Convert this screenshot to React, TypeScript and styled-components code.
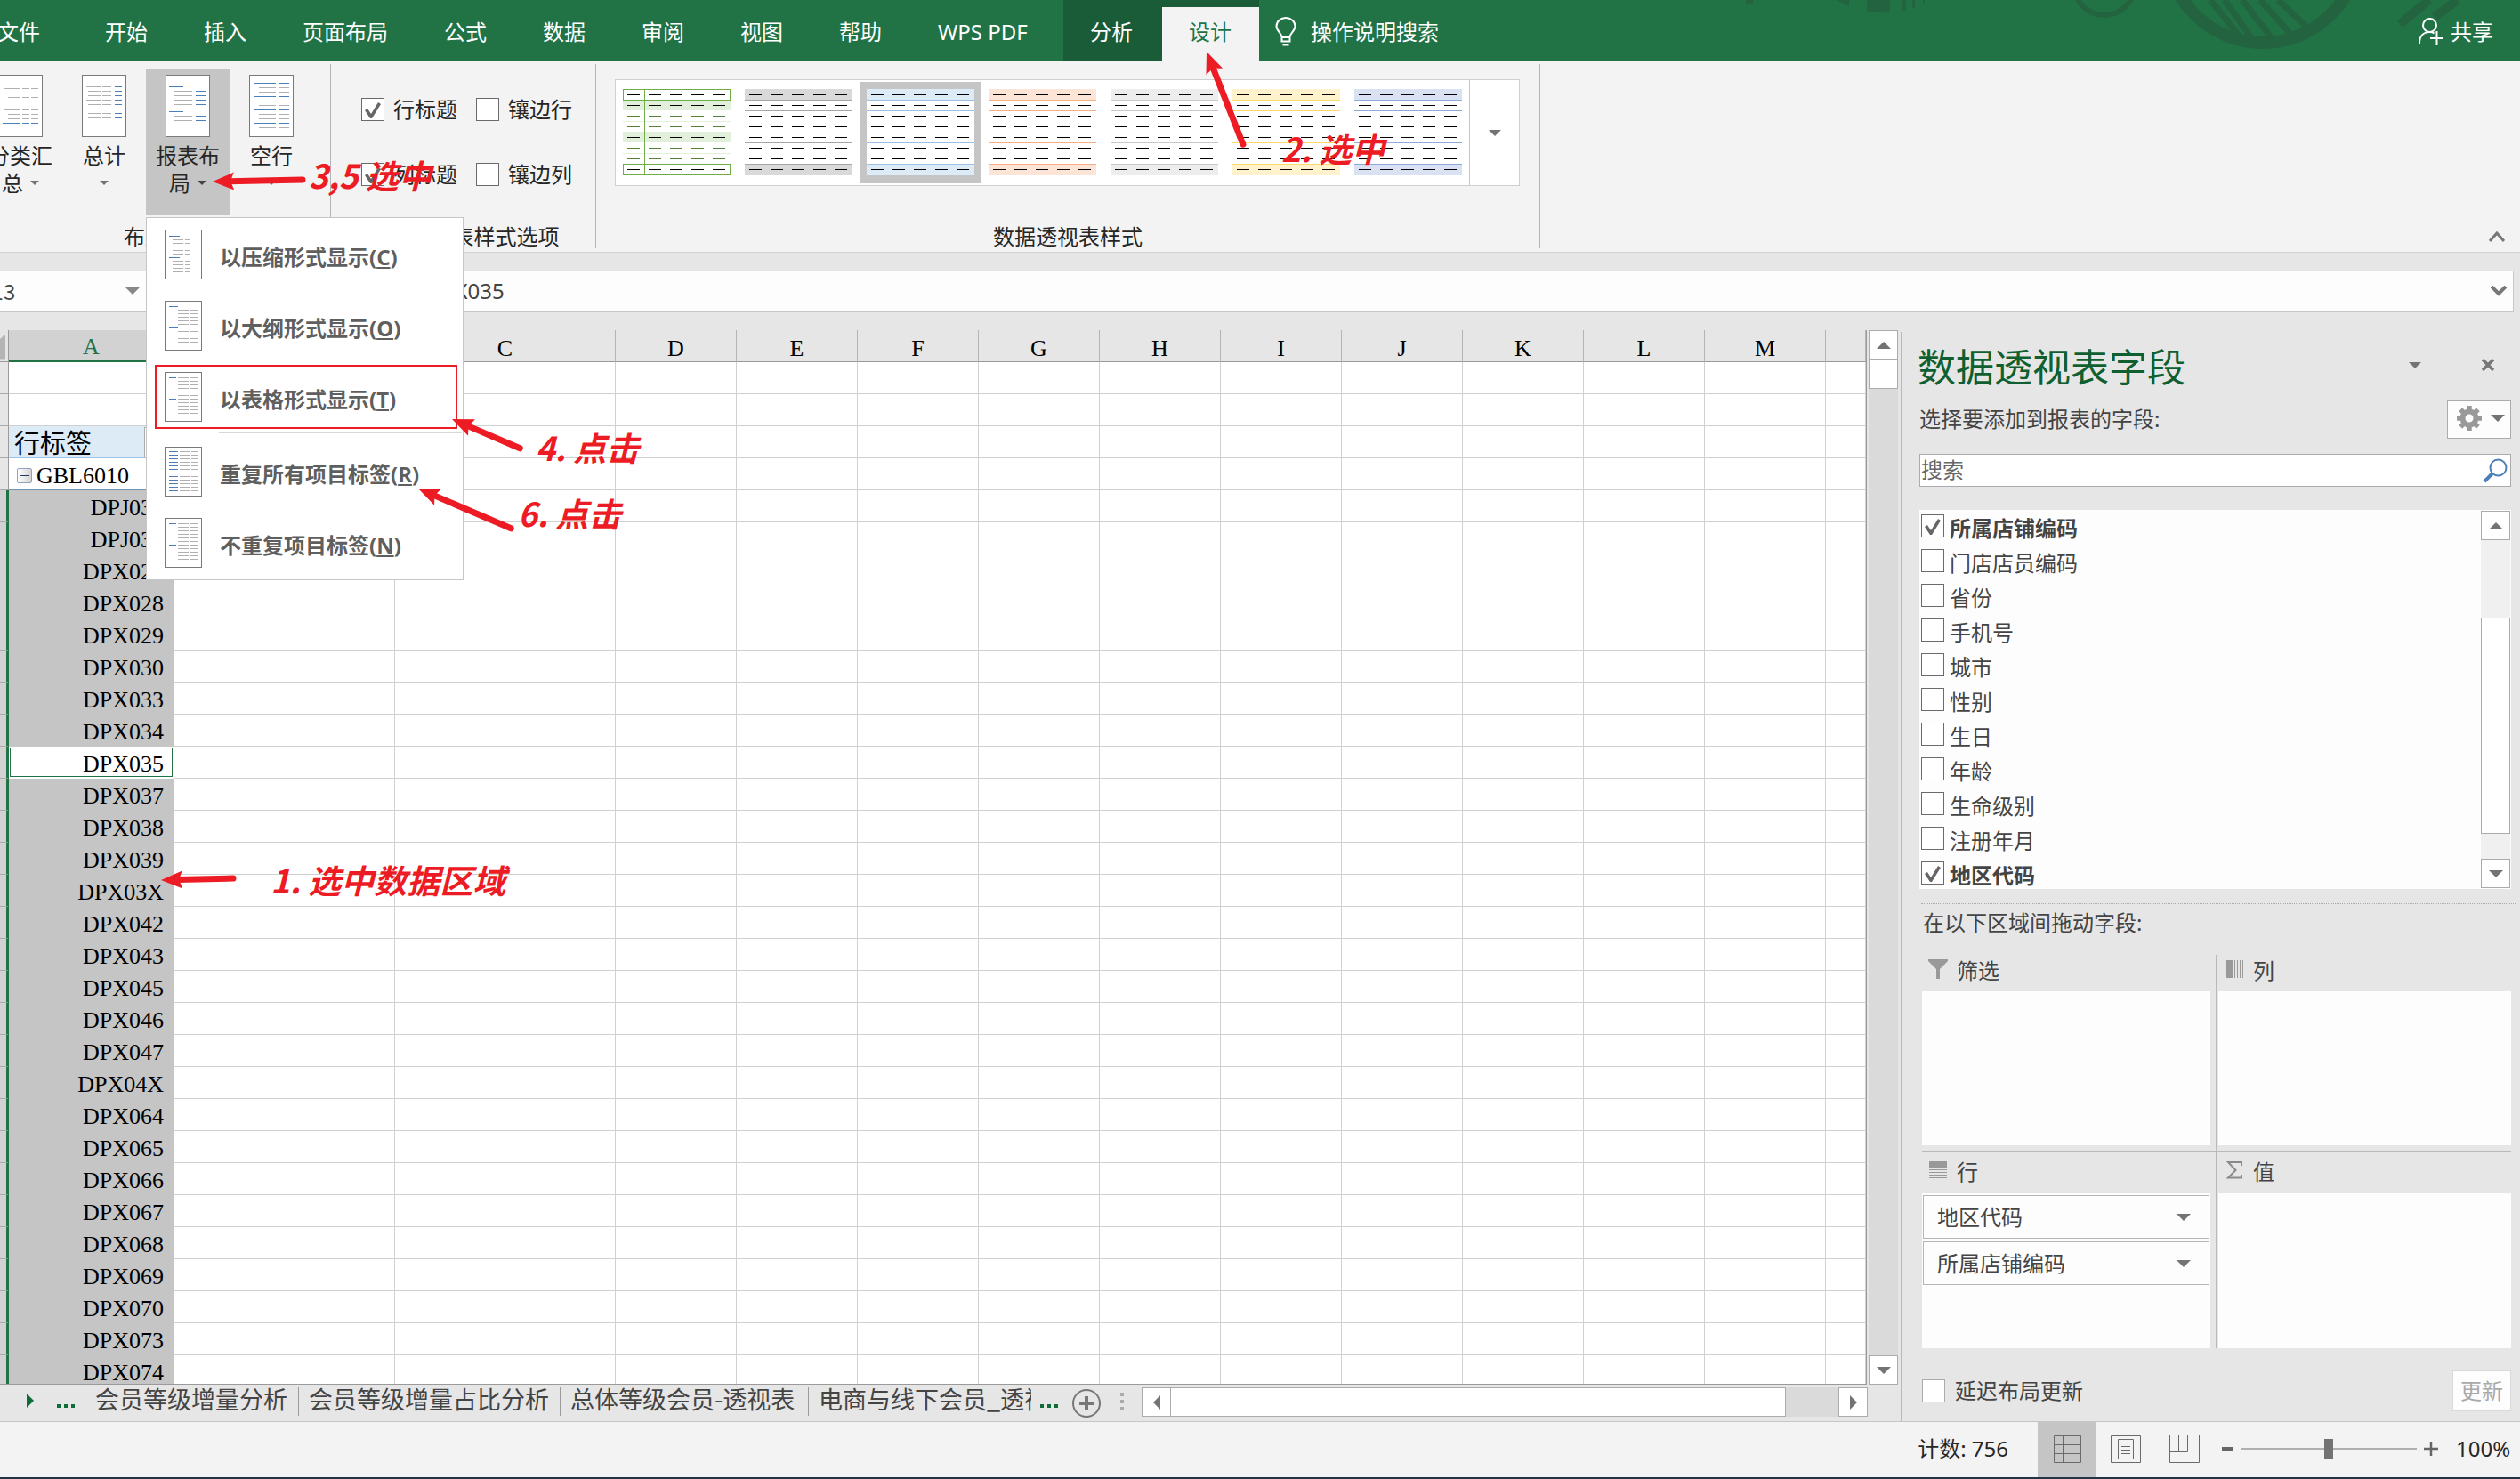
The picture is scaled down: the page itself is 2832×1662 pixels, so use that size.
import React from "react";
import styled, { createGlobalStyle, css } from "styled-components";

const ui = `"Noto Sans", "Noto Sans CJK SC", sans-serif`;
const cjk = `"Noto Sans CJK SC", sans-serif`;
const cellFont = `"Liberation Serif", "Noto Sans CJK SC", serif`;

const color = {
  green: "#217346",
  greenDark: "#1b5c38",
  ribbon: "#f3f3f3",
  chrome: "#e6e6e6",
  line: "#c6c6c6",
  gridLine: "#d0d0d0",
  pressed: "#c5c5c5",
  text: "#262626",
  soft: "#444444",
  mark: "#ed1c24",
  blue: "#4a7fb8",
  grey: "#b0b0b0",
};

const GlobalStyle = createGlobalStyle`
  *, *::before, *::after { box-sizing: border-box; }
  body { margin: 0; overflow: hidden; background: ${color.chrome}; }
  button, input { font: inherit; color: inherit; margin: 0; border-radius: 0; }
  button { padding: 0; border: 0; background: none; }
`;

const Page = styled.div`
  position: relative;
  display: flex;
  flex-direction: column;
  height: 100vh;
  overflow: hidden;
  font: 24px/32px ${ui};
  color: ${color.text};
`;

/* ---------- shared parts ---------- */

const Caret = styled.span<{ $up?: boolean; $size?: number; $tone?: string }>`
  flex: none;
  width: 0;
  height: 0;
  border: ${(p) => p.$size ?? 7}px solid transparent;
  border-bottom-width: 0;
  border-top-color: ${(p) => p.$tone ?? "#737373"};
  ${(p) => p.$up && css`transform: rotate(180deg);`}
`;

const SideCaret = styled.span<{ $left?: boolean; $tone?: string }>`
  width: 0;
  height: 0;
  border: 8px solid transparent;
  border-right-width: 0;
  border-left-color: ${(p) => p.$tone ?? "#737373"};
  ${(p) => p.$left && css`transform: rotate(180deg);`}
`;

const CheckBox = styled.input.attrs({ type: "checkbox" })<{ $light?: boolean }>`
  appearance: none;
  flex: none;
  width: 26px;
  height: 26px;
  border: 1px solid ${(p) => (p.$light ? "#ababab" : "#6a6a6a")};
  background: #fff;
  &:checked::before {
    content: "";
    display: block;
    width: 24px;
    height: 24px;
    background: #666;
    clip-path: polygon(3px 13px, 6px 11px, 10px 17px, 18px 4px, 21px 6px, 11px 22px, 9px 22px);
  }
`;

/* ---------- title bar ---------- */

const TabBar = styled.header`
  position: relative;
  display: flex;
  flex: none;
  height: 68px;
  background: ${color.green};
  color: #fff;
`;

const TabNav = styled.nav`
  display: flex;
  margin-left: -3px;
`;

const Tab = styled.button<{ $first?: boolean; $active?: boolean; $min?: number }>`
  height: 60px;
  min-width: ${(p) => p.$min ?? 0}px;
  margin-top: 8px;
  padding: ${(p) => (p.$first ? "0 43px 4px 0" : p.$active ? "0 31px 4px 30px" : "0 33px 4px 30px")};
  text-align: left;
  white-space: nowrap;
  ${(p) => p.$active && css`
    background: ${color.ribbon};
    color: ${color.green};
  `}
`;

const ContextTabs = styled.div`
  display: flex;
  background: ${color.greenDark};
`;

const TellMe = styled.button`
  display: flex;
  align-items: center;
  gap: 16px;
  height: 60px;
  margin-top: 8px;
  padding: 0 0 4px 18px;
`;

const Share = styled.button`
  position: relative;
  display: flex;
  align-items: center;
  gap: 8px;
  height: 60px;
  margin: 8px 30px 0 auto;
  padding-bottom: 4px;
`;

const Pattern = styled.svg`
  position: absolute;
  top: 0;
  right: 0;
`;

const Decoration = () => (
  <Pattern width="880" height="68" viewBox="1952 0 880 68" fill="none" stroke="#23633f">
    <circle cx="2543" cy="-60" r="108" strokeWidth="14" />
    <circle cx="2365" cy="-17" r="34" strokeWidth="6" />
    <path d="M2484 0 2518 42M2500 0 2532 45M2520 0 2554 44M2540 0 2574 38M2560 0 2592 30" strokeWidth="7" />
    <path d="M2730 0 2697 27M2762 0 2736 19" strokeWidth="10" />
    <path d="M2098 0h26v14q-14 1-26-1zM2138 0h4v12h-4zM2149 0h3v9h-3zM2161 0h2v5h-2zM1962 0h8v4h-8zM2064 0h14v7z" fill="#23633f" stroke="none" />
  </Pattern>
);

const Bulb = () => (
  <svg width="24" height="34" viewBox="0 0 24 34" fill="none" stroke="#fff" strokeWidth="2">
    <path d="M7.500 23c0-5-6-7-6-12.500a10.500 9.500 0 0 1 21 0C22.500 16 16.500 18 16.500 23zM7.500 23v4.500h9V23M8.500 31.500h7" />
  </svg>
);

const Person = () => (
  <svg width="28" height="32" viewBox="0 0 28 32" fill="none" stroke="#fff" strokeWidth="2">
    <circle cx="12.500" cy="8.500" r="7.500" />
    <path d="M1 29c0-8 4-13 11.500-13 2 0 4 .5 5 1.500M13 23h15M20.500 15v16" />
  </svg>
);

/* ---------- ribbon ---------- */

const Ribbon = styled.section`
  position: relative;
  z-index: 2;
  display: flex;
  flex: none;
  height: 216px;
  padding: 4px 0;
  background: ${color.ribbon};
  border-bottom: 1px solid #d0d0d0;
`;

const Group = styled.div<{ $width: number; $lead?: boolean }>`
  display: flex;
  flex-direction: column;
  flex: none;
  width: ${(p) => p.$width}px;
  ${(p) => p.$lead && css`margin-left: -45px;`}
  border-right: 1px solid #b5b5b5;
`;

const GroupName = styled.div`
  margin-top: auto;
  padding-bottom: 1px;
  line-height: 24px;
  text-align: center;
`;

const LayoutButtons = styled.div`
  display: flex;
  padding: 6px 0 0 21px;
`;

const MenuAnchor = styled.div`
  position: relative;
`;

const LayoutButton = styled.button<{ $pressed?: boolean }>`
  display: flex;
  flex-direction: column;
  align-items: center;
  width: 94px;
  height: 164px;
  padding-top: 6px;
  background: ${(p) => (p.$pressed ? color.pressed : "transparent")};
`;

const ButtonLine = styled.span<{ $after?: boolean }>`
  display: flex;
  align-items: center;
  justify-content: center;
  gap: 8px;
  height: 31px;
  white-space: nowrap;
  ${(p) => p.$after && css`margin-top: 5px;`}
`;

type Seg = [number[], [number, number][], boolean];

const Sheet = ({ w, h, segs }: { w: number; h: number; segs: Seg[] }) => (
  <svg width={w} height={h} viewBox={`0 0 ${w} ${h}`} shapeRendering="crispEdges">
    <rect x="0.5" y="0.5" width={w - 1} height={h - 1} fill="#fff" stroke="#7a7a7a" />
    {segs.map(([ys, xs, blue], i) => (
      <path
        key={i}
        d={ys.map((y) => xs.map(([a, b]) => `M${a} ${y + 0.5}H${b}`).join("")).join("")}
        stroke={blue ? color.blue : color.grey}
      />
    ))}
  </svg>
);

const subtotalSegs: Seg[] = [
  [[15, 39], [[7, 25], [27, 35], [37, 45]], false],
  [[20, 25, 44, 49], [[11, 25], [27, 35], [37, 45]], false],
  [[29, 54], [[5, 25], [27, 35], [37, 45]], true],
];
const totalSegs: Seg[] = [
  [[13, 28], [[5, 21], [23, 33]], false],
  [[18, 23, 33, 38, 43, 48], [[7, 21], [23, 33]], false],
  [[13, 18, 23, 28, 33, 38, 43, 48], [[37, 45]], true],
  [[56], [[5, 21], [23, 33], [37, 45]], true],
];
const layoutSegs: Seg[] = [
  [[13, 41], [[4, 20]], true],
  [[18, 23, 28, 33, 46, 51, 56], [[10, 30]], false],
  [[18, 23, 28, 33, 46, 51, 56], [[34, 46]], true],
];
const blankSegs: Seg[] = [
  [[9, 24, 39, 54], [[5, 30], [34, 45]], true],
  [[14, 19, 29, 34, 44, 49, 59], [[11, 30], [34, 45]], false],
];

const steps = (from: number, to: number) => {
  const out: number[] = [];
  for (let y = from; y <= to; y += 4) out.push(y);
  return out;
};
const compactSegs: Seg[] = [
  [[7, 31], [[5, 17]], true],
  [[...steps(11, 27), ...steps(35, 47)], [[9, 21], [23, 29]], false],
];
const outlineSegs: Seg[] = [
  [[6, 30], [[5, 15]], true],
  [[...steps(10, 26), ...steps(34, 46)], [[15, 27], [29, 37]], false],
];
const tabularSegs: Seg[] = [
  [[6, 30], [[5, 13]], true],
  [steps(6, 46), [[15, 27], [29, 37]], false],
];
const repeatSegs: Seg[] = [
  [steps(5, 49), [[5, 15]], true],
  [steps(5, 49), [[17, 28], [30, 37]], false],
];

const Menu = styled.div`
  position: absolute;
  top: 166px;
  left: 0;
  display: flex;
  flex-direction: column;
  width: 357px;
  padding-bottom: 2px;
  background: #fff;
  border: 1px solid ${color.line};
`;

const MenuItem = styled.button<{ $marked?: boolean }>`
  display: flex;
  align-items: flex-start;
  gap: 20px;
  width: 340px;
  height: 72px;
  margin: 5px 0 3px 9px;
  padding: ${(p) => (p.$marked ? "6px 0 0 9px" : "8px 0 0 11px")};
  border: ${(p) => (p.$marked ? `2px solid ${color.mark}` : "0")};
  font-weight: 700;
  line-height: 62px;
  color: #5f5f5f;
  white-space: nowrap;
`;

const MenuRule = styled.hr`
  height: 1px;
  margin: 1px 1px 2px 81px;
  border: 0;
  background: #d8d8d8;
`;

const menuItems: { label: string; hot: string; segs: Seg[]; marked?: boolean; rule?: boolean }[] = [
  { label: "以压缩形式显示", hot: "C", segs: compactSegs },
  { label: "以大纲形式显示", hot: "O", segs: outlineSegs },
  { label: "以表格形式显示", hot: "T", segs: tabularSegs, marked: true, rule: true },
  { label: "重复所有项目标签", hot: "R", segs: repeatSegs },
  { label: "不重复项目标签", hot: "N", segs: tabularSegs },
];

const OptionGrid = styled.div`
  display: grid;
  grid-template-columns: 129px 129px;
  row-gap: 47px;
  padding: 38px 0 0 34px;
`;

const Option = styled.label`
  display: flex;
  align-items: center;
  gap: 10px;
  height: 26px;
  white-space: nowrap;
`;

const Gallery = styled.div`
  display: flex;
  width: 1017px;
  height: 120px;
  margin: 17px 0 0 21px;
  background: #fff;
  border: 1px solid #cfcfcf;
`;

const StyleTile = styled.button<{ $picked?: boolean }>`
  display: flex;
  justify-content: center;
  align-items: flex-start;
  flex: none;
  width: 137px;
  height: 114px;
  margin-top: 2px;
  padding-top: 8px;
  background: ${(p) => (p.$picked ? color.pressed : "transparent")};
`;

const GalleryMore = styled.button`
  display: flex;
  flex: 1;
  align-items: center;
  justify-content: center;
  border-left: 1px solid ${color.line};
`;

const dashX = [5, 29, 53, 77, 101];
const dashY = [6, 18, 30, 42, 54, 66, 78, 90];

const StylePreview = ({ fill, line }: { fill: string; line: string }) => (
  <svg width="121" height="97" viewBox="0 0 121 97" shapeRendering="crispEdges">
    <rect width="121" height="97" fill="#fff" />
    <path d="M0 0h121v12H0zM0 85h121v12H0z" fill={fill} />
    <path d="M0 12.500H121M0 24.500H121M0 60.500H121M0 84.500H121" stroke={line} />
    {dashY.map((y) => (
      <path key={y} d={dashX.map((x) => `M${x} ${y + 0.5}h14`).join("")} stroke="#000" />
    ))}
  </svg>
);

const GreenPreview = () => (
  <svg width="121" height="97" viewBox="0 0 121 97" shapeRendering="crispEdges" fill="none">
    <path d="M0 12h121v12H0zM0 48h121v12H0z" fill="#e2efda" />
    <path d="M0 36.500H121M0 72.500H121" stroke="#e2efda" />
    <path d="M.5 .5h120v12H.5zM.5 84.500h120v12H.5zM24.500 0V97" stroke="#70ad47" />
    {dashY.map((y, i) => (
      <path
        key={y}
        d={dashX.map((x) => `M${x} ${y + 0.5}h14`).join("")}
        stroke={[2, 3, 5, 6].includes(i) ? "#548235" : "#000"}
      />
    ))}
  </svg>
);

const previews = [
  { fill: "#d9d9d9", line: "#a6a6a6" },
  { fill: "#ddebf7", line: "#9bc2e6" },
  { fill: "#fce4d6", line: "#f4b084" },
  { fill: "#ededed", line: "#c9c9c9" },
  { fill: "#fff2cc", line: "#ffd966" },
  { fill: "#d9e1f2", line: "#8ea9db" },
];

const Collapse = styled.button`
  display: flex;
  align-self: flex-end;
  height: 12px;
  margin: 0 17px 7px auto;
`;

/* ---------- formula bar ---------- */

const FormulaBar = styled.div`
  display: flex;
  flex: none;
  height: 47px;
  margin: 20px 7px 0 0;
  background: #fdfdfd;
  border: solid ${color.line};
  border-width: 1px 1px 1px 0;
`;

const NameBox = styled.input`
  width: 145px;
  height: 42px;
  margin-left: -24px;
  padding: 0;
  border: 0;
  background: none;
  font-family: ${cjk};
  color: ${color.soft};
`;

const BarButton = styled.button<{ $width: number }>`
  display: flex;
  align-items: center;
  justify-content: center;
  width: ${(p) => p.$width}px;
  height: 43px;
`;

const FormulaInput = styled.input`
  flex: 1;
  min-width: 0;
  height: 42px;
  padding: 0 0 0 303px;
  border: 0;
  background: none;
  color: ${color.soft};
`;

const Chevron = ({ up, heavy }: { up?: boolean; heavy?: boolean }) => (
  <svg width="18" height="12" viewBox="0 0 18 12" fill="none" stroke="#777" strokeWidth={heavy ? 4 : 3}>
    <path d={up ? "M1 11 9 2l8 9" : "M1 1l8 8 8-8"} />
  </svg>
);

/* ---------- worksheet ---------- */

const Workspace = styled.main`
  display: flex;
  flex: 1;
  min-height: 0;
`;

const SheetArea = styled.section`
  display: flex;
  flex-direction: column;
  flex: 1;
  min-width: 0;
  padding-top: 20px;
`;

const SheetRow = styled.div`
  display: flex;
  flex: 1;
  min-height: 0;
  gap: 2px;
  padding-right: 3px;
`;

const GridFrame = styled.div`
  flex: 1;
  min-width: 0;
  overflow: hidden;
  background: #fff;
  border: solid #9a9a9a;
  border-width: 0 1px 1px 0;
`;

const Grid = styled.table`
  width: 100%;
  table-layout: fixed;
  border-collapse: separate;
  border-spacing: 0;
  font: 26px/31px ${cellFont};
  color: #000;
`;

const ColHead = styled.th<{ $active?: boolean }>`
  height: 36px;
  padding: ${(p) => (p.$active ? 5 : 6)}px 0 0;
  font-weight: 400;
  line-height: 28px;
  background: ${(p) => (p.$active ? "#d2d2d2" : color.chrome)};
  color: ${(p) => (p.$active ? color.green : "#000")};
  border-right: 1px solid #b5b5b5;
  border-bottom: ${(p) => (p.$active ? `3px solid ${color.green}` : "1px solid #9a9a9a")};
`;

const Corner = styled.th`
  padding: 4px 3px 2px 0;
  background: ${color.chrome};
  border-right: 1px solid #9a9a9a;
  border-bottom: 1px solid #9a9a9a;
  &::before {
    content: "";
    display: block;
    height: 28px;
    background: #b5b5b5;
    clip-path: polygon(0 20%, 100% 0, 100% 100%, 0 100%);
  }
`;

const RowHead = styled.th<{ $active?: boolean }>`
  height: 36px;
  padding: 0;
  background: ${(p) => (p.$active ? "#d2d2d2" : color.chrome)};
  border-right: ${(p) => (p.$active ? `3px solid ${color.green}` : "1px solid #9a9a9a")};
  border-bottom: 1px solid #ababab;
`;

const Cell = styled.td<{ $kind?: "head" | "group" | "picked" | "current" }>`
  height: 36px;
  padding: 4px 0 0;
  border-right: 1px solid ${color.gridLine};
  border-bottom: 1px solid ${color.gridLine};
  white-space: nowrap;
  overflow: hidden;
  ${(p) => p.$kind === "head" && css`
    padding: 0 0 0 6px;
    background: #ddebf7;
    border-bottom-color: #9bc2e6;
    font-size: 29px;
  `}
  ${(p) => p.$kind === "group" && css`
    padding-left: 9px;
    border-bottom-color: #6f94b8;
  `}
  ${(p) => (p.$kind === "picked" || p.$kind === "current") && css`
    padding-right: 11px;
    text-align: right;
  `}
  ${(p) => p.$kind === "picked" && css`
    background: ${color.pressed};
    border-right-color: #e6e6e6;
    border-bottom-color: ${color.pressed};
  `}
  ${(p) => p.$kind === "current" && css`
    border-bottom-color: #fff;
    box-shadow: inset 0 0 0 1px #fff, inset 0 0 0 2px ${color.green};
  `}
`;

const GroupCell = styled.div`
  display: flex;
  align-items: center;
  gap: 5px;
`;

const HeadCell = styled.div`
  display: flex;
  align-items: center;
  justify-content: space-between;
  height: 35px;
  & > span { padding-top: 6px; }
`;

const FilterButton = styled.button`
  display: flex;
  align-items: center;
  justify-content: center;
  width: 33px;
  height: 34px;
  background: #fdfdfd;
  border: 1px solid #ababab;
`;

const Toggle = styled.button`
  width: 17px;
  height: 17px;
  border: 1px solid #8fa3c0;
  border-radius: 2px;
  background: linear-gradient(90deg, #fff, #d4d4d4);
  &::before {
    content: "";
    display: block;
    height: 1px;
    margin: 0 2px;
    background: #1f3864;
  }
`;

const VScroll = styled.div`
  display: flex;
  flex-direction: column;
  flex: none;
  width: 33px;
  background: #dadada;
`;

const ScrollButton = styled.button`
  display: flex;
  align-items: center;
  justify-content: center;
  flex: none;
  width: 33px;
  height: 33px;
  background: #fff;
  border: 1px solid #ababab;
`;

const Thumb = styled.div<{ $height?: number; $top?: number }>`
  flex: none;
  height: ${(p) => p.$height ?? 33}px;
  margin-top: ${(p) => p.$top ?? 0}px;
  background: #fff;
  border: 1px solid #ababab;
`;

const Space = styled.div`
  flex: 1;
`;

const SheetTabs = styled.div`
  display: flex;
  flex: none;
  align-items: flex-start;
  height: 41px;
  padding: 3px 37px 0 30px;
  font-size: 27px;
  color: ${color.soft};
`;

const NextSheet = styled.button`
  display: flex;
  align-items: center;
  width: 34px;
  height: 30px;
`;

const Dots = () => (
  <svg width="22" height="5" viewBox="0 0 22 5" fill="#0f6b38">
    <path d="M0 0h4v4H0zM8 0h4v4H8zM16 0h4v4h-4z" />
  </svg>
);

const More = styled.button`
  display: flex;
  align-items: center;
  width: 31px;
  height: 42px;
`;

const TabStrip = styled.div`
  display: flex;
  margin-right: 10px;
`;

const SheetTab = styled.button<{ $width: number }>`
  flex: none;
  width: ${(p) => p.$width}px;
  height: 32px;
  overflow: hidden;
  padding: 0 0 6px 11px;
  border-left: 1px solid #9a9a9a;
  font-family: ${cjk};
  line-height: 26px;
  text-align: left;
  white-space: nowrap;
`;

const AddSheet = styled.button`
  width: 32px;
  height: 32px;
  margin: 2px 22px 0 5px;
`;

const Grip = styled.div`
  display: grid;
  gap: 4px;
  margin: 6px 20px 0 0;
  & > i {
    width: 4px;
    height: 4px;
    background: #ababab;
  }
`;

const HScroll = styled.div`
  display: flex;
  flex: 1;
  background: #dadada;
`;

const HThumb = styled.div`
  flex: 1;
  height: 33px;
  margin-right: 59px;
  background: #fff;
  border: solid #ababab;
  border-width: 1px 1px 1px 0;
`;

const columns = ["A", "B", "C", "D", "E", "F", "G", "H", "I", "J", "K", "L", "M", ""];
const codes = [
  "DPJ031", "DPJ032", "DPX026", "DPX028", "DPX029", "DPX030", "DPX033", "DPX034", "DPX035",
  "DPX037", "DPX038", "DPX039", "DPX03X", "DPX042", "DPX043", "DPX045", "DPX046", "DPX047",
  "DPX04X", "DPX064", "DPX065", "DPX066", "DPX067", "DPX068", "DPX069", "DPX070", "DPX073", "DPX074",
];
const others = columns.slice(1);

const Worksheet = () => (
  <Grid>
    <colgroup>
      <col width="10" />
      <col width="186" />
      <col width="248" />
      <col width="248" />
      {columns.slice(3, 13).map((c) => <col key={c} width="136" />)}
      <col />
    </colgroup>
    <thead>
      <tr>
        <Corner />
        {columns.map((c) => <ColHead key={c} scope="col" $active={c === "A"}>{c}</ColHead>)}
      </tr>
    </thead>
    <tbody>
      {[1, 2].map((n) => (
        <tr key={n}><RowHead />{columns.map((c) => <Cell key={c} />)}</tr>
      ))}
      <tr>
        <RowHead />
        <Cell $kind="head">
          <HeadCell><span>行标签</span><FilterButton aria-label="筛选行标签"><Caret /></FilterButton></HeadCell>
        </Cell>
        {others.map((c) => <Cell key={c} />)}
      </tr>
      <tr>
        <RowHead />
        <Cell $kind="group"><GroupCell><Toggle aria-label="折叠" />GBL6010</GroupCell></Cell>
        {others.map((c) => <Cell key={c} />)}
      </tr>
      {codes.map((code) => (
        <tr key={code}>
          <RowHead $active />
          <Cell $kind={code === "DPX035" ? "current" : "picked"}>{code}</Cell>
          {others.map((c) => <Cell key={c} />)}
        </tr>
      ))}
    </tbody>
  </Grid>
);

/* ---------- field pane ---------- */

const Pane = styled.aside`
  display: flex;
  flex-direction: column;
  flex: none;
  width: 696px;
  margin-top: 22px;
  padding: 14px 10px 0 20px;
  border-left: 1px solid #b9b9b9;
  color: ${color.soft};
`;

const PaneHead = styled.div`
  display: flex;
  align-items: center;
  height: 50px;
`;

const Title = styled.h2`
  flex: 1;
  margin: 0 0 0 -2px;
  padding-top: 2px;
  font: 400 43px/48px ${ui};
  color: #0f5f30;
`;

const HeadButton = styled.button<{ $gap: number }>`
  display: flex;
  margin: 0 ${(p) => p.$gap}px 4px 0;
`;

const PaneHint = styled.div`
  display: flex;
  align-items: center;
  justify-content: space-between;
  height: 44px;
  margin-top: 12px;
`;

const GearButton = styled.button`
  display: flex;
  align-items: center;
  justify-content: space-between;
  width: 72px;
  height: 43px;
  padding: 0 6px 2px 10px;
  background: #fdfdfd;
  border: 1px solid #ababab;
`;

const SearchBox = styled.label`
  display: flex;
  align-items: center;
  height: 37px;
  margin-top: 17px;
  padding-right: 3px;
  background: #fff;
  border: 1px solid #ababab;
`;

const SearchInput = styled.input`
  flex: 1;
  height: 35px;
  padding: 0 1px 2px;
  border: 0;
  background: none;
  &::placeholder { color: #666; opacity: 1; }
`;

const FieldList = styled.div`
  display: flex;
  height: 426px;
  margin-top: 26px;
  padding-right: 1px;
  background: #fdfdfd;
`;

const Fields = styled.div`
  flex: 1;
  padding: 2px 0 0 2px;
  overflow: hidden;
`;

const Field = styled.label<{ $on?: boolean }>`
  display: flex;
  align-items: center;
  gap: 6px;
  height: 39px;
  padding-bottom: 2px;
  font-weight: ${(p) => (p.$on ? 700 : 400)};
  & > input { margin-bottom: 5px; }
`;

const FieldScroll = styled(VScroll)`
  margin: 1px 0;
  background: #f0f0f0;
`;

const DragHint = styled.div`
  margin: 16px -5px 0 2px;
  padding: 5px 2px 0;
  border-top: 1px dotted #ababab;
`;

const Quadrants = styled.div`
  display: grid;
  grid-template-columns: 330px 1fr;
  margin: 20px 0 0 3px;
`;

const Quadrant = styled.section<{ $right?: boolean; $low?: boolean }>`
  display: flex;
  flex-direction: column;
  height: ${(p) => (p.$low ? 222 : 220)}px;
  padding-bottom: ${(p) => (p.$low ? 0 : 6)}px;
  ${(p) => p.$low && css`border-top: 1px solid #b9b9b9;`}
  ${(p) => p.$right ? css`
    padding-left: 2px;
    border-left: 1px solid #b9b9b9;
  ` : css`
    & > div { margin-right: 6px; }
  `}
`;

const QuadrantName = styled.h3<{ $low?: boolean; $right?: boolean }>`
  display: flex;
  align-items: center;
  gap: 10px;
  height: ${(p) => (p.$low ? 47 : 41)}px;
  margin: 0;
  padding: 0 0 ${(p) => (p.$low ? 1 : 5)}px ${(p) => (p.$right ? 9 : 7)}px;
  font-size: 24px;
  font-weight: 400;
  line-height: 40px;
  & > svg { margin-bottom: 4px; }
`;

const DropZone = styled.div`
  display: flex;
  flex-direction: column;
  gap: 3px;
  flex: 1;
  padding: 2px 1px;
  background: #fdfdfd;
`;

const FieldChip = styled.button`
  display: flex;
  align-items: center;
  justify-content: space-between;
  height: 49px;
  padding: 1px 20px 0 15px;
  background: #fdfdfd;
  border: 1px solid #b5b5b5;
`;

const PaneFoot = styled.div`
  display: flex;
  align-items: center;
  justify-content: space-between;
  margin: 25px 0 0 3px;
`;

const Defer = styled.label`
  display: flex;
  align-items: center;
  gap: 11px;
`;

const UpdateButton = styled.button`
  width: 66px;
  height: 46px;
  background: #fdfdfd;
  border: 1px solid #d9d9d9;
  color: #a9a9a9;
`;

const Gear = () => (
  <svg width="28" height="28" viewBox="0 0 28 28">
    <circle cx="14" cy="14" r="7.500" fill="none" stroke="#999" strokeWidth="6" />
    <path d="M14 0v5M14 23v5M0 14h5M23 14h5M4.200 4.200l3.500 3.500M20.300 20.300l3.500 3.500M23.800 4.200l-3.500 3.500M7.700 20.300l-3.500 3.500" stroke="#999" strokeWidth="5.500" />
  </svg>
);

const Lens = () => (
  <svg width="28" height="28" viewBox="0 0 28 28" fill="none" stroke={color.blue}>
    <circle cx="17.500" cy="10.500" r="9" strokeWidth="2" />
    <path d="M11 17 2 26" strokeWidth="4" />
  </svg>
);

const Funnel = () => (
  <svg width="22" height="22" viewBox="0 0 22 22" fill="#999"><path d="M0 0h22v2l-9 9v11H9V11L0 2z" /></svg>
);
const ColsIcon = () => (
  <svg width="20" height="20" viewBox="0 0 20 20" fill="#999"><path d="M0 0h7v20H0zM9 0h1v20H9zM12 0h1v20h-1zM15 0h1v20h-1zM18 0h1v20h-1z" /></svg>
);
const RowsIcon = () => (
  <svg width="22" height="20" viewBox="0 0 22 20" fill="#999"><path d="M1 0h20v7H1zM1 9h20v1H1zM1 12h20v1H1zM1 15h20v1H1zM1 18h20v1H1z" /></svg>
);
const SumIcon = () => (
  <svg width="20" height="20" viewBox="0 0 20 20" fill="none" stroke="#8a8a8a" strokeWidth="2">
    <path d="M17 5V1H2l8.500 9L2 18.500h15V15" />
  </svg>
);

const fields = ["所属店铺编码", "门店店员编码", "省份", "手机号", "城市", "性别", "生日", "年龄", "生命级别", "注册年月", "地区代码"];

const FieldPane = () => (
  <Pane>
    <PaneHead>
      <Title>数据透视表字段</Title>
      <HeadButton $gap={68} aria-label="任务窗格选项"><Caret /></HeadButton>
      <HeadButton $gap={19} aria-label="关闭">
        <svg width="14" height="14" viewBox="0 0 14 14" stroke="#777" strokeWidth="3.500"><path d="M1 1l12 12M13 1 1 13" /></svg>
      </HeadButton>
    </PaneHead>
    <PaneHint>
      选择要添加到报表的字段:
      <GearButton aria-label="工具"><Gear /><Caret $size={8} /></GearButton>
    </PaneHint>
    <SearchBox>
      <SearchInput type="text" placeholder="搜索" aria-label="搜索" />
      <Lens />
    </SearchBox>
    <FieldList>
      <Fields>
        {fields.map((name, i) => {
          const on = i === 0 || i === fields.length - 1;
          return (
            <Field key={name} $on={on}><CheckBox defaultChecked={on} />{name}</Field>
          );
        })}
      </Fields>
      <FieldScroll>
        <ScrollButton aria-label="向上"><Caret $up $size={8} /></ScrollButton>
        <Thumb $top={87} $height={243} />
        <Space />
        <ScrollButton aria-label="向下"><Caret $size={8} /></ScrollButton>
      </FieldScroll>
    </FieldList>
    <DragHint>在以下区域间拖动字段:</DragHint>
    <Quadrants>
      <Quadrant><QuadrantName><Funnel />筛选</QuadrantName><DropZone /></Quadrant>
      <Quadrant $right><QuadrantName $right><ColsIcon />列</QuadrantName><DropZone /></Quadrant>
      <Quadrant $low>
        <QuadrantName $low><RowsIcon />行</QuadrantName>
        <DropZone>
          <FieldChip>地区代码<Caret $size={8} /></FieldChip>
          <FieldChip>所属店铺编码<Caret $size={8} /></FieldChip>
        </DropZone>
      </Quadrant>
      <Quadrant $low $right><QuadrantName $low $right><SumIcon />值</QuadrantName><DropZone /></Quadrant>
    </Quadrants>
    <PaneFoot>
      <Defer><CheckBox $light />延迟布局更新</Defer>
      <UpdateButton disabled>更新</UpdateButton>
    </PaneFoot>
  </Pane>
);

/* ---------- status bar ---------- */

const StatusBar = styled.footer`
  display: flex;
  flex: none;
  align-items: center;
  justify-content: flex-end;
  height: 65px;
  padding-right: 10px;
  background: ${color.ribbon};
  border-top: 1px solid ${color.line};
  border-bottom: 2px solid #243447;
`;

const Count = styled.span`
  margin: 0 33px 2px 0;
`;

const ViewButton = styled.button<{ $on?: boolean }>`
  display: flex;
  align-items: center;
  justify-content: center;
  width: 66px;
  height: 62px;
  padding-bottom: 2px;
  background: ${(p) => (p.$on ? color.pressed : "transparent")};
`;

const ZoomGroup = styled.div`
  display: flex;
  align-items: center;
  margin: 0 0 2px 9px;
`;

const ZoomButton = styled.button`
  display: flex;
  width: 16px;
`;

const Zoom = styled.input.attrs({ type: "range" })`
  appearance: none;
  width: 198px;
  height: 22px;
  margin: 0 8px 0 5px;
  background: linear-gradient(#b0b0b0, #b0b0b0) center / 100% 2px no-repeat;
  &::-webkit-slider-thumb {
    appearance: none;
    width: 10px;
    height: 22px;
    background: #737373;
  }
`;

const Percent = styled.span`
  width: 62px;
  margin-left: 20px;
  white-space: nowrap;
`;

/* ---------- red step marks drawn over the window ---------- */

const Note = styled.span<{ $x: number; $y: number }>`
  position: absolute;
  z-index: 5;
  left: ${(p) => p.$x}px;
  top: ${(p) => p.$y}px;
  font: italic 700 37px/44px ${cjk};
  color: ${color.mark};
  white-space: nowrap;
  pointer-events: none;
`;

const ArrowBox = styled.svg<{ $x: number; $y: number }>`
  position: absolute;
  z-index: 5;
  left: ${(p) => p.$x}px;
  top: ${(p) => p.$y}px;
  overflow: visible;
  pointer-events: none;
`;

const Arrow = ({ tip, tail }: { tip: [number, number]; tail: [number, number] }) => {
  const dx = tail[0] - tip[0];
  const dy = tail[1] - tip[1];
  const length = Math.hypot(dx, dy);
  const angle = (Math.atan2(dy, dx) * 180) / Math.PI;
  return (
    <ArrowBox $x={tip[0]} $y={tip[1]} width="1" height="1">
      <g transform={`rotate(${angle})`} fill={color.mark} stroke={color.mark}>
        <path d="M0 0 24-10 20 0 24 10z" stroke="none" />
        <path d={`M18 0H${length - 3}`} strokeWidth="7" strokeLinecap="round" />
      </g>
    </ArrowBox>
  );
};

const mainTabs = ["文件", "开始", "插入", "页面布局", "公式", "数据", "审阅", "视图", "帮助", "WPS PDF"];

export default function App() {
  return (
    <Page>
      <GlobalStyle />
      <TabBar>
        <Decoration />
        <TabNav>
          {mainTabs.map((t, i) => (
            <Tab key={t} $first={i === 0} $min={t === "WPS PDF" ? 171 : undefined}>{t}</Tab>
          ))}
          <ContextTabs>
            <Tab>分析</Tab>
            <Tab $active>设计</Tab>
          </ContextTabs>
        </TabNav>
        <TellMe><Bulb />操作说明搜索</TellMe>
        <Share><Person />共享</Share>
      </TabBar>

      <Ribbon>
        <Group $width={417} $lead>
          <LayoutButtons>
            <LayoutButton>
              <Sheet w={50} h={70} segs={subtotalSegs} />
              <ButtonLine $after>分类汇</ButtonLine>
              <ButtonLine>总<Caret $size={5} /></ButtonLine>
            </LayoutButton>
            <LayoutButton>
              <Sheet w={50} h={70} segs={totalSegs} />
              <ButtonLine $after>总计</ButtonLine>
              <ButtonLine><Caret $size={5} /></ButtonLine>
            </LayoutButton>
            <MenuAnchor>
              <LayoutButton $pressed>
                <Sheet w={50} h={70} segs={layoutSegs} />
                <ButtonLine $after>报表布</ButtonLine>
                <ButtonLine>局<Caret $size={5} $tone="#444" /></ButtonLine>
              </LayoutButton>
              <Menu>
                {menuItems.map((m) => (
                  <React.Fragment key={m.hot}>
                    <MenuItem $marked={m.marked}>
                      <Sheet w={42} h={56} segs={m.segs} />
                      <span>{m.label}(<u>{m.hot}</u>)</span>
                    </MenuItem>
                    {m.rule && <MenuRule />}
                  </React.Fragment>
                ))}
              </Menu>
            </MenuAnchor>
            <LayoutButton>
              <Sheet w={50} h={70} segs={blankSegs} />
              <ButtonLine $after>空行</ButtonLine>
              <ButtonLine><Caret $size={5} /></ButtonLine>
            </LayoutButton>
          </LayoutButtons>
          <GroupName>布局</GroupName>
        </Group>
        <Group $width={298}>
          <OptionGrid>
            <Option><CheckBox defaultChecked />行标题</Option>
            <Option><CheckBox />镶边行</Option>
            <Option><CheckBox defaultChecked />列标题</Option>
            <Option><CheckBox />镶边列</Option>
          </OptionGrid>
          <GroupName>数据透视表样式选项</GroupName>
        </Group>
        <Group $width={1061}>
          <Gallery>
            <StyleTile aria-label="浅色 1"><GreenPreview /></StyleTile>
            {previews.map((p, i) => (
              <StyleTile key={p.fill} $picked={i === 1} aria-label={`浅色 ${i + 2}`}><StylePreview {...p} /></StyleTile>
            ))}
            <GalleryMore aria-label="其他"><Caret /></GalleryMore>
          </Gallery>
          <GroupName>数据透视表样式</GroupName>
        </Group>
        <Collapse aria-label="折叠功能区"><Chevron up /></Collapse>
      </Ribbon>

      <FormulaBar>
        <NameBox defaultValue="A13" aria-label="名称框" />
        <BarButton $width={56} aria-label="名称列表"><Caret $size={8} $tone="#888" /></BarButton>
        <FormulaInput defaultValue="DPX035" aria-label="编辑栏" />
        <BarButton $width={32} aria-label="展开编辑栏"><Chevron heavy /></BarButton>
      </FormulaBar>

      <Workspace>
        <SheetArea>
          <SheetRow>
            <GridFrame><Worksheet /></GridFrame>
            <VScroll>
              <ScrollButton aria-label="向上"><Caret $up $size={8} /></ScrollButton>
              <Thumb />
              <Space />
              <ScrollButton aria-label="向下"><Caret $size={8} /></ScrollButton>
            </VScroll>
          </SheetRow>
          <SheetTabs>
            <NextSheet aria-label="下一张"><SideCaret $tone="#0f6b38" /></NextSheet>
            <More aria-label="更多工作表"><Dots /></More>
            <TabStrip>
              <SheetTab $width={240}>会员等级增量分析</SheetTab>
              <SheetTab $width={294}>会员等级增量占比分析</SheetTab>
              <SheetTab $width={279}>总体等级会员-透视表</SheetTab>
              <SheetTab $width={251}>电商与线下会员_透视表</SheetTab>
            </TabStrip>
            <More aria-label="更多工作表"><Dots /></More>
            <AddSheet aria-label="新工作表">
              <svg width="32" height="32" viewBox="0 0 32 32" fill="none" stroke="#777">
                <circle cx="16" cy="16" r="15" strokeWidth="2" />
                <path d="M16 8v16M8 16h16" strokeWidth="4" />
              </svg>
            </AddSheet>
            <Grip><i /><i /><i /></Grip>
            <HScroll>
              <ScrollButton aria-label="向左"><SideCaret $left /></ScrollButton>
              <HThumb />
              <ScrollButton aria-label="向右"><SideCaret /></ScrollButton>
            </HScroll>
          </SheetTabs>
        </SheetArea>
        <FieldPane />
      </Workspace>

      <StatusBar>
        <Count>计数: 756</Count>
        <ViewButton $on aria-label="普通">
          <svg width="31" height="31" viewBox="0 0 31 31" fill="none" stroke="#6a6a6a"><path d="M.5 .5h30v30H.5zM10.500 0v31M20.500 0v31M0 10.500h31M0 20.500h31" /></svg>
        </ViewButton>
        <ViewButton aria-label="页面布局">
          <svg width="34" height="31" viewBox="0 0 34 31" fill="none" stroke="#6a6a6a"><path d="M.5 .5h33v30H.5zM8.500 4.500h17v22h-17zM12 8.500h10M12 12.500h10M12 16.500h10M12 20.500h10" /></svg>
        </ViewButton>
        <ViewButton aria-label="分页预览">
          <svg width="34" height="32" viewBox="0 0 34 32" fill="none" stroke="#6a6a6a"><path d="M.5 .5h33v31H.5zM10.500 0v19.500M20.500 0v19.500H0" /></svg>
        </ViewButton>
        <ZoomGroup>
          <ZoomButton aria-label="缩小"><svg width="13" height="16" viewBox="0 0 13 16"><path d="M0 6h12v4H0z" fill="#666" /></svg></ZoomButton>
          <Zoom defaultValue={50} aria-label="显示比例" />
          <ZoomButton aria-label="放大"><svg width="16" height="16" viewBox="0 0 16 16" stroke="#666" strokeWidth="2.500"><path d="M8 0v16M0 8h16" /></svg></ZoomButton>
          <Percent>100%</Percent>
        </ZoomGroup>
      </StatusBar>

      <Arrow tip={[1356, 58]} tail={[1398, 165]} />
      <Note $x={1440} $y={144}>2. 选中</Note>
      <Arrow tip={[239, 204]} tail={[343, 202]} />
      <Note $x={347} $y={174}>3,5 选中</Note>
      <Arrow tip={[508, 471]} tail={[587, 505]} />
      <Note $x={602} $y={480}>4. 点击</Note>
      <Arrow tip={[470, 549]} tail={[577, 595]} />
      <Note $x={582} $y={554}>6. 点击</Note>
      <Arrow tip={[181, 989]} tail={[265, 987]} />
      <Note $x={304} $y={966}>1. 选中数据区域</Note>
    </Page>
  );
}
